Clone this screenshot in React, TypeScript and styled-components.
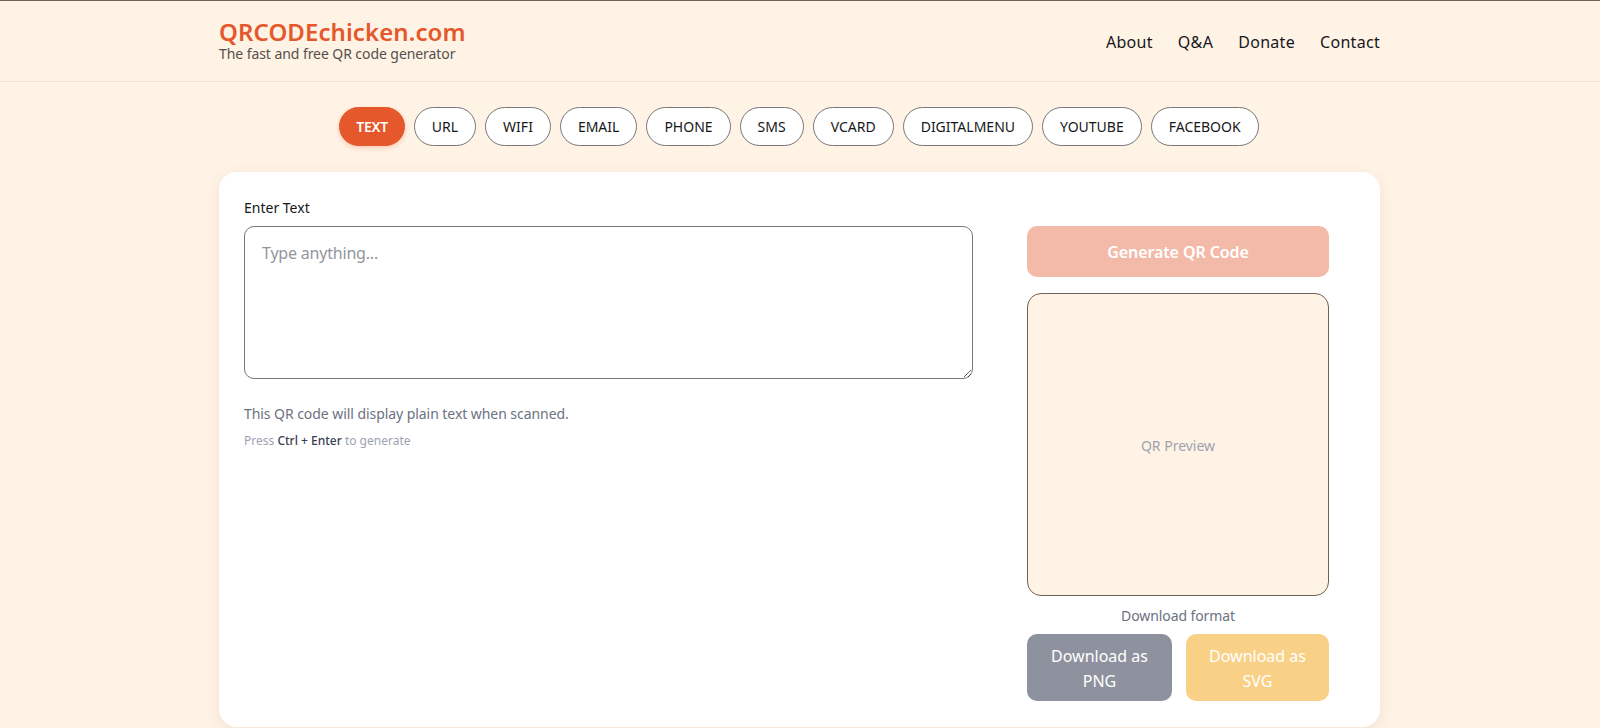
import styled, { createGlobalStyle } from "styled-components";

const FONT = `"Noto Sans", "Open Sans", "Liberation Sans", sans-serif`;

const GlobalStyle = createGlobalStyle`
  html, body {
    margin: 0;
    padding: 0;
    height: 100%;
    background: #fff3e6;
    overflow: hidden;
  }
  * { box-sizing: border-box; }
  body { font-family: ${FONT}; }
`;

const Page = styled.div`
  min-height: 728px;
  border-top: 1px solid #6f6252;
  background: #fff3e6;
`;

const Header = styled.header`
  height: 81px;
  border-bottom: 1px solid #eee4d9;
  padding: 0 220px 0 219px;
  display: flex;
  align-items: center;
  justify-content: space-between;
`;

const Brand = styled.div`
  align-self: flex-start;
  padding-top: 18px;
  display: flex;
  flex-direction: column;
`;

const Logo = styled.div`
  font-size: 24px;
  line-height: 26px;
  font-weight: 600;
  color: #e5582b;
  letter-spacing: 0.08px;
  margin-bottom: 1px;
`;

const Tagline = styled.div`
  font-size: 14px;
  line-height: 16px;
  letter-spacing: -0.07px;
  color: #55504a;
`;

const Nav = styled.nav`
  display: flex;
  gap: 25px;
  padding-top: 2px;
`;

const NavLink = styled.a`
  font-size: 16px;
  letter-spacing: 0.3px;
  color: #17171a;
`;

const Pills = styled.div`
  display: flex;
  justify-content: center;
  gap: 9px;
  margin-top: 25px;
  padding-right: 2px;
`;

const Pill = styled.button<{ $active?: boolean }>`
  height: 39px;
  padding: 0 ${(p) => (p.$active ? "16px" : "17px")};
  border-radius: 20px;
  font-family: ${FONT};
  font-size: 14px;
  font-weight: ${(p) => (p.$active ? 600 : 400)};
  letter-spacing: ${(p) => (p.$active ? "-0.3px" : "0")};
  color: ${(p) => (p.$active ? "#fff" : "#17171a")};
  background: ${(p) => (p.$active ? "#e5582b" : "#fff")};
  border: 1px solid ${(p) => (p.$active ? "#e5582b" : "#777")};
  box-shadow: ${(p) => (p.$active ? "0 2px 5px rgba(232, 88, 44, 0.25)" : "none")};
`;

const Card = styled.main`
  margin: 26px 220px 0 219px;
  height: 555px;
  background: #fff;
  border-radius: 18px;
  padding: 25px 51px 0 25px;
  box-shadow: 0 4px 14px rgba(120, 90, 60, 0.1);
  display: grid;
  grid-template-columns: 729px 302px;
  column-gap: 54px;
`;

const LeftColumn = styled.div`
  display: flex;
  flex-direction: column;
`;

const FieldLabel = styled.label`
  font-size: 14px;
  line-height: 22px;
  height: 29px;
  color: #17171a;
`;

const TextArea = styled.textarea`
  width: 100%;
  height: 153px;
  padding: 14px 17px;
  border: 1px solid #777;
  border-radius: 10px;
  background: #fff;
  font-family: ${FONT};
  font-size: 16px;
  line-height: 24px;
  letter-spacing: -0.2px;
  outline: none;
  &::placeholder { color: #92959c; }
`;

const Hint = styled.p`
  margin: 25px 0 0;
  font-size: 14px;
  line-height: 20px;
  letter-spacing: -0.06px;
  color: #6b7280;
`;

const Shortcut = styled.p`
  margin: 9px 0 0;
  font-size: 12px;
  line-height: 16px;
  color: #9ca3af;
  b {
    font-weight: 500;
    color: #374151;
  }
`;

const RightColumn = styled.div`
  padding-top: 29px;
  display: flex;
  flex-direction: column;
`;

const GenerateButton = styled.button`
  height: 51px;
  border: none;
  border-radius: 10px;
  background: #f4baa9;
  color: #fff;
  font-family: ${FONT};
  font-size: 16px;
  letter-spacing: -0.1px;
  font-weight: 600;
`;

const Preview = styled.div`
  height: 303px;
  margin-top: 16px;
  padding-top: 2px;
  border: 1px solid #6f6252;
  border-radius: 14px;
  background: #fff3e6;
  display: flex;
  align-items: center;
  justify-content: center;
  font-size: 14px;
  color: #9ca3af;
`;

const FormatLabel = styled.div`
  margin-top: 10px;
  font-size: 14px;
  line-height: 20px;
  letter-spacing: -0.1px;
  text-align: center;
  color: #6b7280;
`;

const DownloadRow = styled.div`
  margin-top: 8px;
  display: grid;
  grid-template-columns: 145px 143px;
  column-gap: 14px;
`;

const DownloadButton = styled.button<{ $tone: string }>`
  height: 67px;
  padding: 2px 16px 0;
  border: none;
  border-radius: 10px;
  background: ${(p) => p.$tone};
  color: #fff;
  font-family: ${FONT};
  font-size: 16px;
  line-height: 25px;
`;

const tabs = ["TEXT", "URL", "WIFI", "EMAIL", "PHONE", "SMS", "VCARD", "DIGITALMENU", "YOUTUBE", "FACEBOOK"];
const links = ["About", "Q&A", "Donate", "Contact"];

export default function App() {
  return (
    <Page>
      <GlobalStyle />
      <Header>
        <Brand>
          <Logo>QRCODEchicken.com</Logo>
          <Tagline>The fast and free QR code generator</Tagline>
        </Brand>
        <Nav>
          {links.map((l) => (
            <NavLink key={l}>{l}</NavLink>
          ))}
        </Nav>
      </Header>
      <Pills>
        {tabs.map((t) => (
          <Pill key={t} $active={t === "TEXT"}>
            {t}
          </Pill>
        ))}
      </Pills>
      <Card>
        <LeftColumn>
          <FieldLabel>Enter Text</FieldLabel>
          <TextArea placeholder="Type anything..." />
          <Hint>This QR code will display plain text when scanned.</Hint>
          <Shortcut>
            Press <b>Ctrl + Enter</b> to generate
          </Shortcut>
        </LeftColumn>
        <RightColumn>
          <GenerateButton>Generate QR Code</GenerateButton>
          <Preview>QR Preview</Preview>
          <FormatLabel>Download format</FormatLabel>
          <DownloadRow>
            <DownloadButton $tone="#8e929e">Download as PNG</DownloadButton>
            <DownloadButton $tone="#f9d186">Download as SVG</DownloadButton>
          </DownloadRow>
        </RightColumn>
      </Card>
    </Page>
  );
}
